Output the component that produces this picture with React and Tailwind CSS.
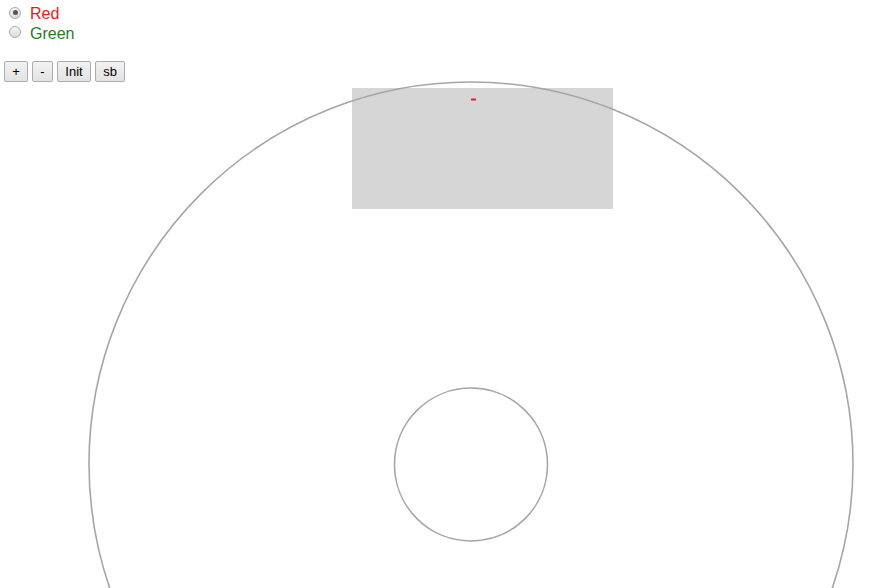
export default function App() {
  const Radio = ({ checked }) => (
    <span className="relative inline-flex h-[12px] w-[12px] shrink-0 items-center justify-center rounded-full border border-[#a9a9a9] bg-gradient-to-b from-[#f4f4f4] to-[#dcdcdc]">
      {checked && <span className="h-[5px] w-[5px] rounded-full bg-[#555]" />}
    </span>
  );
  const Btn = ({ children, w }) => (
    <button className={`h-[21px] ${w} rounded-[2px] border border-[#adadad] bg-gradient-to-b from-[#f2f2f2] to-[#e3e3e3] text-[13px] leading-none text-black`}>
      {children}
    </button>
  );
  return (
    <div className="relative h-[588px] w-[893px] overflow-hidden bg-white" style={{ fontFamily: '"Liberation Sans", Arial, sans-serif' }}>
      <svg className="pointer-events-none absolute left-0 top-0" width="893" height="588" viewBox="0 0 893 588">
        <rect x="352" y="88" width="261" height="121" fill="#d6d6d6" />
        <circle cx="471" cy="464" r="382" fill="none" stroke="#a6a6a6" strokeWidth="1.6" />
        <circle cx="471" cy="464.5" r="76.5" fill="none" stroke="#a6a6a6" strokeWidth="1.6" />
        <rect x="471" y="98.5" width="5" height="2" fill="#e0202a" />
      </svg>
      <div className="relative flex flex-col pt-[4px]">
        <label className="flex h-[20px] items-center">
          <span className="ml-[9px] mt-[-8px]"><Radio checked /></span>
          <span className="ml-[9px] text-[16px] text-[#e51a1a]">Red</span>
        </label>
        <label className="flex h-[20px] items-center">
          <span className="ml-[9px] mt-[-3px]"><Radio /></span>
          <span className="ml-[9px] text-[16px] text-[#2b7a1f]">Green</span>
        </label>
        <div className="ml-[4px] mt-[17px] flex gap-[4px]">
          <Btn w="w-[24px]">+</Btn>
          <Btn w="w-[21px]">-</Btn>
          <Btn w="w-[34px]">Init</Btn>
          <Btn w="w-[30px]">sb</Btn>
        </div>
      </div>
    </div>
  );
}
